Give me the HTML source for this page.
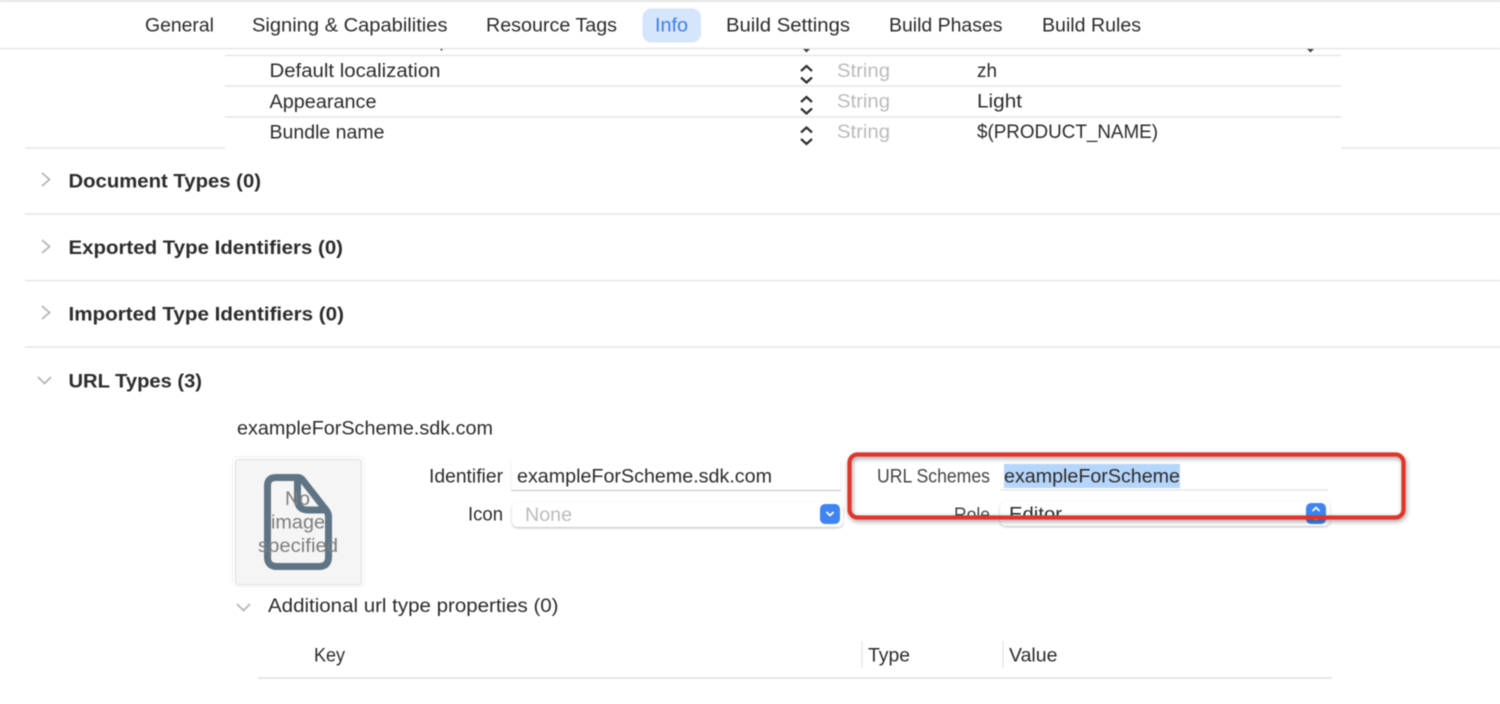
<!DOCTYPE html>
<html><head><meta charset="utf-8">
<style>
html,body{margin:0;padding:0;background:#fff;width:1500px;height:704px;overflow:hidden}
svg{display:block;filter:blur(.5px)}
text{font-family:"Liberation Sans",sans-serif;font-size:19px;fill:#2b2b2b}
.b{font-weight:bold;fill:#2c2c2c;font-size:19.500px}
.g{fill:#bbb}
.l{stroke:#e6e6e6;stroke-width:1.600;fill:none}
.c{stroke:#b5b5b5;stroke-width:1.800;fill:none}
.s{stroke:#2e2e2e;stroke-width:2.200;fill:none}
</style></head><body>
<svg width="1500" height="704" viewBox="0 0 1500 704" xmlns="http://www.w3.org/2000/svg">
<defs>
<filter id="sh" x="-5%" y="-30%" width="110%" height="170%"><feDropShadow dx="1" dy="2" stdDeviation="2.500" flood-color="#000" flood-opacity=".38"/></filter>
<filter id="ps" x="-5%" y="-30%" width="110%" height="170%"><feDropShadow dx="0" dy="1" stdDeviation="1" flood-color="#000" flood-opacity=".28"/></filter>
</defs>
<rect width="1500" height="704" fill="#fff"/>
<rect width="1500" height="2" fill="#e4e4e4"/>

<!-- tabs -->
<rect x="642.500" y="8.500" width="58.500" height="34" rx="9" fill="#d5e5fb"/>
<text x="145" y="31.500" textLength="69" lengthAdjust="spacingAndGlyphs">General</text>
<text x="252" y="31.500" textLength="195.500" lengthAdjust="spacingAndGlyphs">Signing &amp; Capabilities</text>
<text x="486" y="31.500" textLength="131" lengthAdjust="spacingAndGlyphs">Resource Tags</text>
<text x="655" y="31.500" textLength="33" lengthAdjust="spacingAndGlyphs" style="fill:#3d7fe6">Info</text>
<text x="726" y="31.500" textLength="124" lengthAdjust="spacingAndGlyphs">Build Settings</text>
<text x="889" y="31.500" textLength="113.500" lengthAdjust="spacingAndGlyphs">Build Phases</text>
<text x="1042" y="31.500" textLength="99" lengthAdjust="spacingAndGlyphs">Build Rules</text>
<path class="l" d="M0 48.500H1500"/>

<!-- plist rows -->
<path class="l" d="M225 55.500H1341M225 86H1341M225 117H1341"/>
<path d="M440 49h3l-1.500 2zM803 49h7l-3.500 3.500zM1307 49h7l-3.500 3.500z" fill="#444"/>
<text x="269.500" y="77" textLength="171" lengthAdjust="spacingAndGlyphs">Default localization</text>
<text x="269.500" y="108" textLength="107" lengthAdjust="spacingAndGlyphs">Appearance</text>
<text x="269.500" y="138.500" textLength="115" lengthAdjust="spacingAndGlyphs">Bundle name</text>
<path class="s" d="M801 71l5.500-5 5.500 5M801 77.500l5.500 5 5.500-5M801 102l5.500-5 5.500 5M801 108.500l5.500 5 5.500-5M801 132.500l5.500-5 5.500 5M801 139l5.500 5 5.500-5"/>
<text class="g" x="837" y="77" textLength="53" lengthAdjust="spacingAndGlyphs">String</text>
<text class="g" x="837" y="107.500" textLength="53" lengthAdjust="spacingAndGlyphs">String</text>
<text class="g" x="837" y="138" textLength="53" lengthAdjust="spacingAndGlyphs">String</text>
<text x="977" y="77" textLength="20" lengthAdjust="spacingAndGlyphs">zh</text>
<text x="977" y="107.500" textLength="45" lengthAdjust="spacingAndGlyphs">Light</text>
<text x="977" y="138" textLength="181" lengthAdjust="spacingAndGlyphs">$(PRODUCT_NAME)</text>

<!-- sections -->
<path class="l" d="M25 148H225M1341 148H1500M25 214H1500M25 280.500H1500M25 347H1500"/>
<path class="c" d="M42 173l7.500 6.500-7.500 6.500M42 240l7.500 6.500-7.500 6.500M42 306l7.500 6.500-7.500 6.500M38 377l6.500 6.500 6.500-6.500"/>
<text class="b" x="68.500" y="187.500" textLength="192.500" lengthAdjust="spacingAndGlyphs">Document Types (0)</text>
<text class="b" x="68.500" y="254" textLength="274.500" lengthAdjust="spacingAndGlyphs">Exported Type Identifiers (0)</text>
<text class="b" x="68.500" y="320.500" textLength="275.500" lengthAdjust="spacingAndGlyphs">Imported Type Identifiers (0)</text>
<text class="b" x="68.500" y="387.500" textLength="133.500" lengthAdjust="spacingAndGlyphs">URL Types (3)</text>

<text x="237" y="434.500" textLength="256" lengthAdjust="spacingAndGlyphs">exampleForScheme.sdk.com</text>

<!-- image well -->
<rect x="232.500" y="456.500" width="132" height="130" rx="5" fill="#fff" stroke="#f0f0f0"/>
<rect x="235.500" y="459.500" width="126" height="125" rx="3" fill="#f5f5f5" stroke="#dedede"/>
<path d="M276 477.500H297.500Q301 477.500 303 480.500L326 510Q328.500 513 328.500 517V557Q328.500 566.500 319 566.500H277Q267.500 566.500 267.500 557V486Q267.500 477.500 276 477.500ZM297.500 477.500V499Q297.500 510 308 510H328" fill="none" stroke="#5f7586" stroke-width="7" stroke-linejoin="round"/>
<text x="285" y="505" textLength="25" lengthAdjust="spacingAndGlyphs" style="fill:#7d7d7d">No</text>
<text x="271" y="528.500" textLength="54" lengthAdjust="spacingAndGlyphs" style="fill:#7d7d7d">image</text>
<text x="258" y="552" textLength="80" lengthAdjust="spacingAndGlyphs" style="fill:#7d7d7d">specified</text>

<!-- left form -->
<text x="429" y="482.500" textLength="74" lengthAdjust="spacingAndGlyphs">Identifier</text>
<text x="468" y="520.500" textLength="35" lengthAdjust="spacingAndGlyphs">Icon</text>
<path d="M511 490.500H841" stroke="#c8c8c8" stroke-width="1.200"/>
<path d="M511 462V490M841 462V490" stroke="#f2f2f2"/>
<text x="517" y="482.500" textLength="255" lengthAdjust="spacingAndGlyphs">exampleForScheme.sdk.com</text>
<rect x="512" y="502" width="331" height="25" rx="6" fill="#fff" filter="url(#ps)"/>
<text class="g" x="525" y="521" textLength="47" lengthAdjust="spacingAndGlyphs">None</text>
<rect x="820" y="504" width="20" height="20" rx="5" fill="#3f84f2"/>
<path d="M826.500 512l3.500 3.500 3.500-3.500" stroke="#fff" stroke-width="1.800" fill="none"/>

<!-- right form -->
<text x="877" y="482.500" textLength="113" lengthAdjust="spacingAndGlyphs" style="fill:#444">URL Schemes</text>
<rect x="1004" y="464" width="176" height="24" fill="#b6d5fb"/>
<text x="1004" y="482.500" textLength="176" lengthAdjust="spacingAndGlyphs">exampleForScheme</text>
<path d="M1000 490H1328" stroke="#e2e2e2" stroke-width="1.200"/>
<rect x="1000" y="501" width="330" height="25" rx="6" fill="#fff" filter="url(#ps)"/>
<text x="954" y="521" textLength="36" lengthAdjust="spacingAndGlyphs" style="fill:#444">Role</text>
<text x="1009" y="520.500" textLength="53" lengthAdjust="spacingAndGlyphs">Editor</text>
<rect x="1306" y="503" width="20" height="21" rx="5" fill="#3f84f2"/>
<path d="M1312.500 511l3.500-3.500 3.500 3.500M1312.500 516l3.500 3.500 3.500-3.500" stroke="#fff" stroke-width="1.600" fill="none"/>
<rect x="950" y="518" width="48" height="5" fill="#fff"/>
<rect x="1004" y="518" width="70" height="5" fill="#fff"/>

<!-- red highlight -->
<rect x="849.500" y="454.500" width="554" height="63" rx="8" fill="none" stroke="#e0362c" stroke-width="4.200" filter="url(#sh)"/>

<!-- additional properties -->
<path class="c" d="M237 604l6.500 6.500 6.500-6.500"/>
<text x="268" y="612" textLength="290.500" lengthAdjust="spacingAndGlyphs">Additional url type properties (0)</text>
<text x="314" y="661.500" textLength="31" lengthAdjust="spacingAndGlyphs">Key</text>
<text x="868" y="661.500" textLength="42" lengthAdjust="spacingAndGlyphs">Type</text>
<text x="1009" y="661.500" textLength="48.500" lengthAdjust="spacingAndGlyphs">Value</text>
<path d="M862 641V668M1003 641V668" stroke="#e2e2e2" stroke-width="1.200"/>
<path d="M258 678H1332" stroke="#e0e0e0" stroke-width="1.600"/>
</svg>
</body></html>
